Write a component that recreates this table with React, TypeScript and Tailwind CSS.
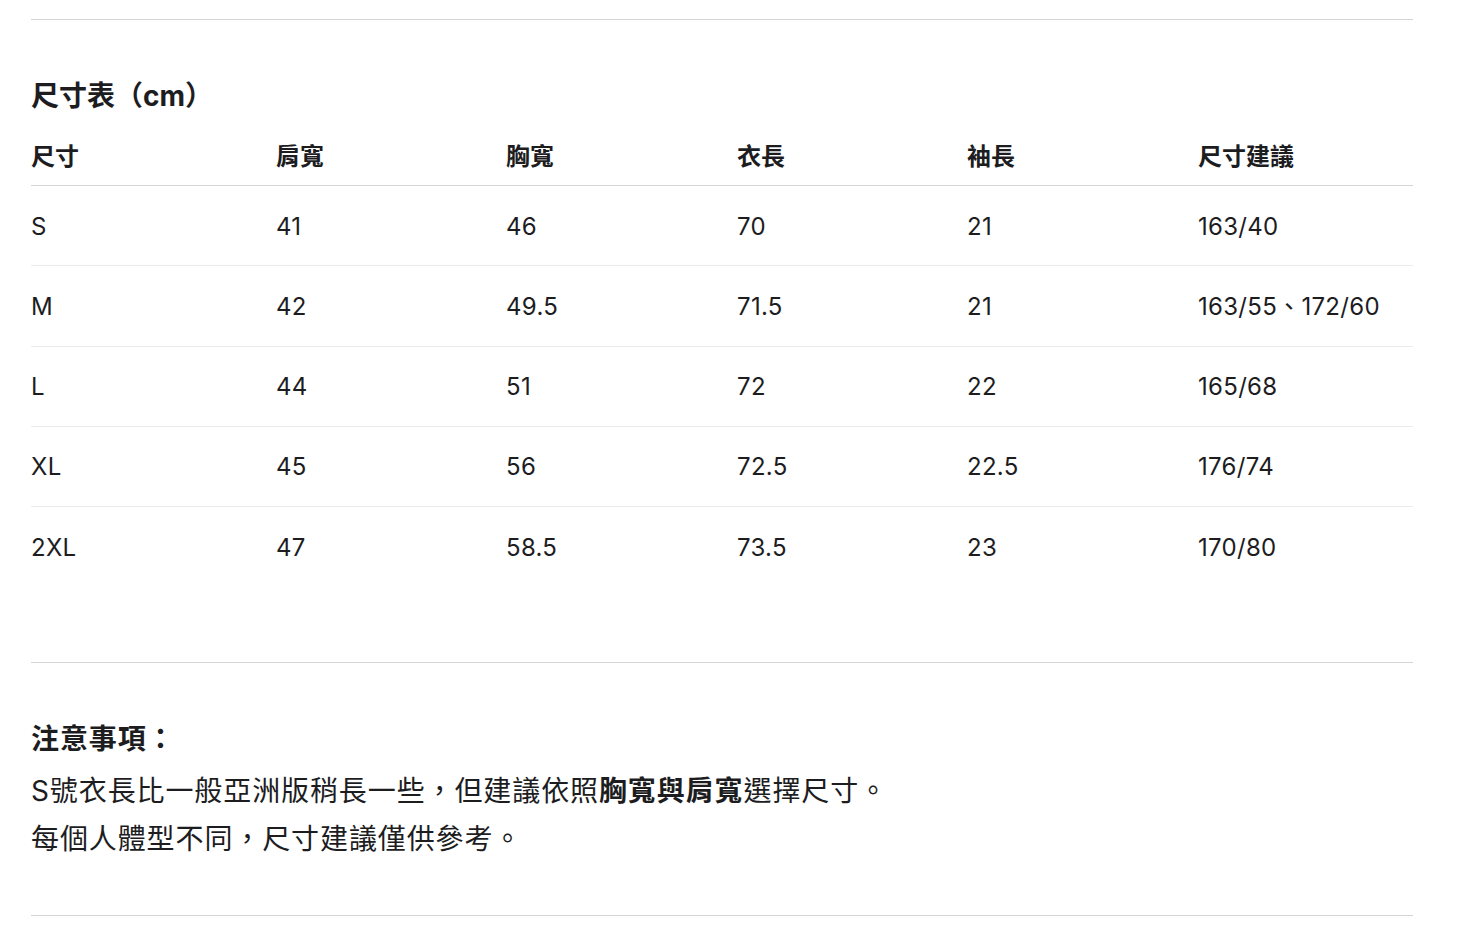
import React from "react";

const rows = [
  ["S", "41", "46", "70", "21", "163/40"],
  ["M", "42", "49.5", "71.5", "21", "163/55、172/60"],
  ["L", "44", "51", "72", "22", "165/68"],
  ["XL", "45", "56", "72.5", "22.5", "176/74"],
  ["2XL", "47", "58.5", "73.5", "23", "170/80"],
];

const headers = ["尺寸", "肩寬", "胸寬", "衣長", "袖長", "尺寸建議"];

export default function App() {
  return (
    <div
      className="bg-white min-h-[934px] w-[1460px] text-[#1d1d1f]"
      style={{ fontFamily: 'Inter, "Noto Sans CJK TC", sans-serif' }}
    >
      <div className="ml-[31px] w-[1382px] pt-[19px]">
        <div className="border-t border-[#d4d4d4]" />
        <div className="mt-[56px] h-[40px] leading-[40px] text-[28px] font-bold">
          尺寸表（cm）
        </div>
        <div className="mt-[11px] grid grid-cols-[245px_230px_231px_230px_231px_1fr] h-[59px] items-center border-b border-[#d4d4d4] text-[24px] font-bold">
          {headers.map((h) => (
            <div key={h} className="pt-[2px]">{h}</div>
          ))}
        </div>
        {rows.map((r, i) => (
          <div
            key={r[0]}
            className={
              "grid grid-cols-[245px_230px_231px_230px_231px_1fr] h-[80.25px] items-center text-[24px] " +
              (i < rows.length - 1 ? "border-b border-[#ececec]" : "")
            }
          >
            {r.map((c, j) => (
              <div key={j} className="pt-[2px] tracking-[0.3px]">{c}</div>
            ))}
          </div>
        ))}
        <div className="mt-[75px] border-t border-[#d4d4d4]" />
        <div className="pt-[52px] text-[28px] tracking-[0.9px]">
          <div className="leading-[48px] font-bold">注意事項：</div>
          <div className="mt-[4px] leading-[48px]">
            S號衣長比一般亞洲版稍長一些，但建議依照<span className="font-bold">胸寬與肩寬</span>選擇尺寸。
          </div>
          <div className="leading-[48px]">每個人體型不同，尺寸建議僅供參考。</div>
        </div>
        <div className="mt-[52px] border-t border-[#d4d4d4]" />
      </div>
    </div>
  );
}
